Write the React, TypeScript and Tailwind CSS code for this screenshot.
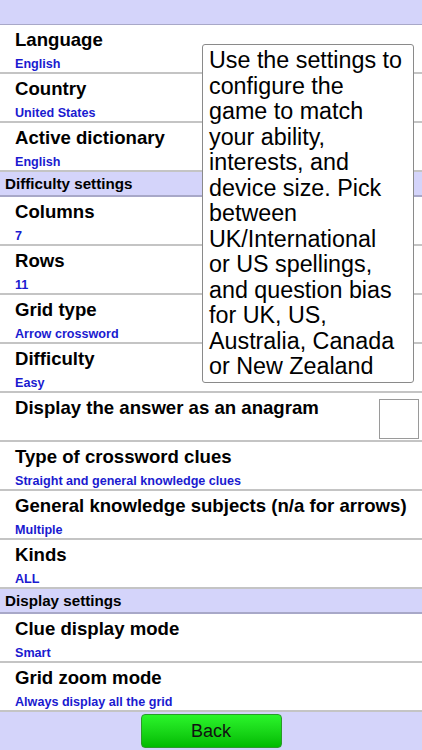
import React from "react";

const font = { fontFamily: '"Liberation Sans", Arial, sans-serif' };

function Row({ title, value }: { title: string; value?: string }) {
  return (
    <div className="h-[49px] border-b-2 border-[#c4c4c4] pl-[15px] pt-[4px] bg-white">
      <div className="text-[18.6px] font-bold leading-[22px] text-black whitespace-nowrap">{title}</div>
      {value && (
        <div className="text-[12.6px] font-bold leading-[14px] mt-[6px] text-[#1a1ad0]">{value}</div>
      )}
    </div>
  );
}

function Header({ title }: { title: string }) {
  return (
    <div className="h-[25px] bg-[#d4d4fa] border-b-2 border-[#a8a8c8] pl-[5px] pt-[3px] text-[15.2px] font-bold leading-[17px] text-black">
      {title}
    </div>
  );
}

const tipLines = [
  "Use the settings to",
  "configure the",
  "game to match",
  "your ability,",
  "interests, and",
  "device size. Pick",
  "between",
  "UK/International",
  "or US spellings,",
  "and question bias",
  "for UK, US,",
  "Australia, Canada",
  "or New Zealand",
];

export default function App() {
  return (
    <div className="relative w-[422px] h-[750px] bg-white overflow-hidden" style={font}>
      <div className="h-[25px] bg-[#d4d4fa] border-b border-[#a8a8c8]" />
      <Row title="Language" value="English" />
      <Row title="Country" value="United States" />
      <Row title="Active dictionary" value="English" />
      <Header title="Difficulty settings" />
      <Row title="Columns" value="7" />
      <Row title="Rows" value="11" />
      <Row title="Grid type" value="Arrow crossword" />
      <Row title="Difficulty" value="Easy" />
      <div className="h-[49px] border-b-2 border-[#c4c4c4] pl-[15px] pt-[4px] flex justify-between">
        <div className="text-[18.6px] font-bold leading-[22px] text-black">Display the answer as an anagram</div>
        <div className="w-[40px] h-[40px] border border-[#9a9a9a] mr-[3px] mt-[2px]" />
      </div>
      <Row title="Type of crossword clues" value="Straight and general knowledge clues" />
      <Row title="General knowledge subjects (n/a for arrows)" value="Multiple" />
      <Row title="Kinds" value="ALL" />
      <Header title="Display settings" />
      <Row title="Clue display mode" value="Smart" />
      <Row title="Grid zoom mode" value="Always display all the grid" />
      <div className="h-[38px] bg-[#d4d4fa] flex justify-center items-start pt-[2px]">
        <button className="w-[141px] h-[34px] rounded-[4px] border border-[#2a9a2a] bg-gradient-to-b from-[#2af52a] to-[#00bb00] text-[18px] text-[#111] leading-[32px]">
          Back
        </button>
      </div>
      <div className="absolute left-[202px] top-[44px] w-[212px] h-[339px] bg-white border border-[#8a8a8a] rounded-[3px] pl-[6px] pt-[3px] text-[23.3px] leading-[25.5px] text-black">
        {tipLines.map((l) => (
          <div key={l} className="whitespace-nowrap">{l}</div>
        ))}
      </div>
    </div>
  );
}
